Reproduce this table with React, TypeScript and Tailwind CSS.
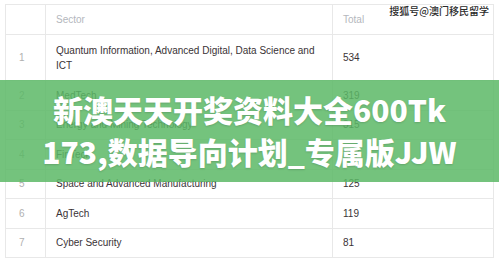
const rows = [
  { n: 1, sector: 'Quantum Information, Advanced Digital, Data Science and ICT', total: 534 },
  { n: 2, sector: 'MedTech', total: 319 },
  { n: 3, sector: 'Energy and Mining Technology', total: 315 },
  { n: 4, sector: 'FinTech', total: 187 },
  { n: 5, sector: 'Space and Advanced Manufacturing', total: 125 },
  { n: 6, sector: 'AgTech', total: 119 },
  { n: 7, sector: 'Cyber Security', total: 81 },
];

export default function App() {
  return (
    <div className="relative w-[499px] h-[263px] overflow-hidden bg-white font-['Liberation_Sans',Arial,sans-serif]">
      <div className="pl-[5px] pt-[4px]">
        <table className="w-[489px] table-fixed border-collapse border border-[#e8e8e8] text-[10px]">
          <colgroup>
            <col className="w-[40px]" />
            <col className="w-[287px]" />
            <col />
          </colgroup>
          <thead>
            <tr className="h-[30px]">
              <th className="border border-[#e8e8e8]" />
              <th className="border border-[#e8e8e8] pl-[10px] text-left font-normal text-[#b4b7bd]">Sector</th>
              <th className="border border-[#e8e8e8] pl-[10px] text-left font-normal text-[#b4b7bd]">Total</th>
            </tr>
          </thead>
          <tbody>
            {rows.map((r) => (
              <tr key={r.n} className={r.n === 1 ? 'h-[46px]' : 'h-[29.5px]'}>
                <td className="border border-[#e8e8e8] pl-[13px] text-[#b0b0b0]">{r.n}</td>
                <td className="border border-[#e8e8e8] pl-[10px] pr-[6px] leading-[15px] text-[#3a3336]">{r.sector}</td>
                <td className="border border-[#e8e8e8] pl-[10px] text-[#3a3336]">{r.total}</td>
              </tr>
            ))}
          </tbody>
        </table>
      </div>

      {/* watermark */}
      <div className="absolute right-[10px] top-[5px] text-[10px] leading-[12px] text-[#2a2a2a] [text-shadow:0_0_2px_#fff,0_0_2px_#fff] font-['Noto_Sans_CJK_SC',sans-serif] font-medium">
        搜狐号@澳门移民留学
      </div>

      {/* title band */}
      <div className="absolute left-0 right-0 top-[80px] h-[102px] bg-[#5cb866]/85 flex flex-col items-center justify-center pb-[3px]">
        <div className="text-center text-[30px] leading-[42px] font-black text-white font-['Noto_Sans_CJK_SC',sans-serif] [text-shadow:0_1px_2px_rgba(0,0,0,0.15)]">
          <div>新澳天天开奖资料大全600Tk</div>
          <div>173,数据导向计划_专属版JJW</div>
        </div>
      </div>
    </div>
  );
}
